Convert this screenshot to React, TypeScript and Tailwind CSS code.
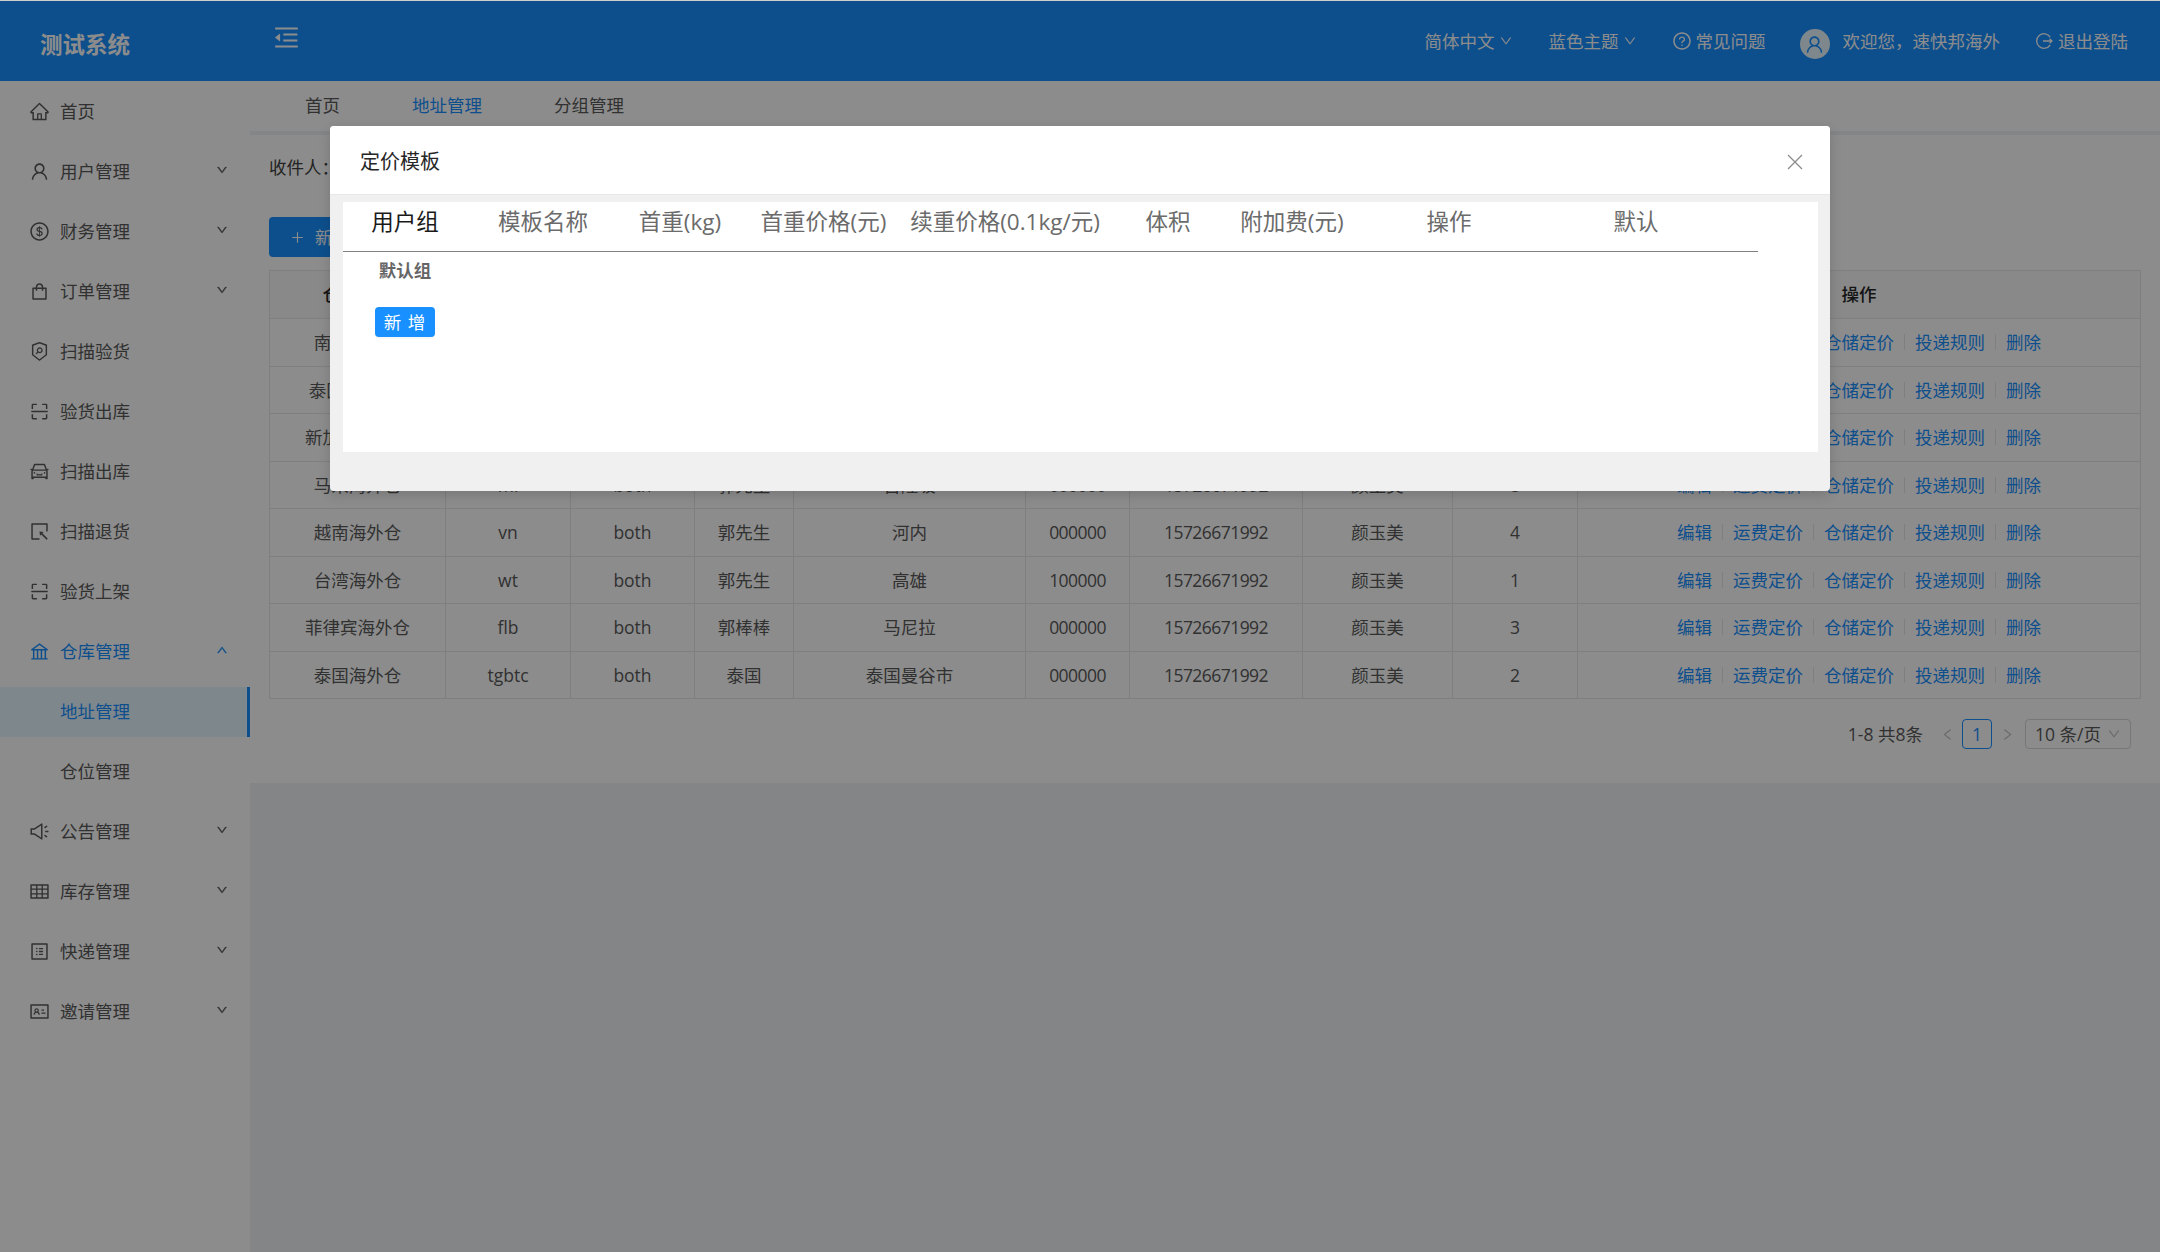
import React from "react";
import {
  AiOutlineHome, AiOutlineUser, AiOutlineDollar, AiOutlineShopping, AiOutlineSecurityScan, AiOutlineScan,
  AiOutlineCar, AiOutlineSelect, AiOutlineBank, AiOutlineSound, AiOutlineTable, AiOutlineProfile, AiOutlineIdcard,
  AiOutlineQuestionCircle, AiOutlineMenuFold, AiOutlinePlus, AiOutlineDown, AiOutlineUp, AiOutlineLeft, AiOutlineRight,
} from "react-icons/ai";

const Arrow = ({ up }: { up?: boolean }) =>
  up ? <AiOutlineUp size={12} className="ml-auto mr-[22px] stroke-[40px] mb-[3px]" /> : <AiOutlineDown size={12} className="ml-auto mr-[22px] stroke-[40px] mb-[3px]" />;

const menu: { label: string; icon: React.ReactNode; arrow?: boolean; open?: boolean }[] = [
  { label: "首页", icon: <AiOutlineHome size={21} /> },
  { label: "用户管理", icon: <AiOutlineUser size={21} />, arrow: true },
  { label: "财务管理", icon: <AiOutlineDollar size={21} />, arrow: true },
  { label: "订单管理", icon: <AiOutlineShopping size={21} />, arrow: true },
  { label: "扫描验货", icon: <AiOutlineSecurityScan size={21} /> },
  { label: "验货出库", icon: <AiOutlineScan size={21} /> },
  { label: "扫描出库", icon: <AiOutlineCar size={21} /> },
  { label: "扫描退货", icon: <AiOutlineSelect size={21} /> },
  { label: "验货上架", icon: <AiOutlineScan size={21} /> },
];
const menuAfter: { label: string; icon: React.ReactNode }[] = [
  { label: "公告管理", icon: <AiOutlineSound size={21} /> },
  { label: "库存管理", icon: <AiOutlineTable size={21} /> },
  { label: "快递管理", icon: <AiOutlineProfile size={21} /> },
  { label: "邀请管理", icon: <AiOutlineIdcard size={21} /> },
];

const rows = [
  ["南非海外仓", "nf", "both", "郭先生", "开普敦", "000000", "15726671992", "颜玉美", "5"],
  ["泰国1海外仓", "tg", "both", "郭先生", "曼谷", "000000", "15726671992", "颜玉美", "6"],
  ["新加坡海外仓", "xjp", "both", "郭先生", "新加坡", "000000", "15726671992", "颜玉美", "7"],
  ["马来海外仓", "ml", "both", "郭先生", "吉隆坡", "000000", "15726671992", "颜玉美", "8"],
  ["越南海外仓", "vn", "both", "郭先生", "河内", "000000", "15726671992", "颜玉美", "4"],
  ["台湾海外仓", "wt", "both", "郭先生", "高雄", "100000", "15726671992", "颜玉美", "1"],
  ["菲律宾海外仓", "flb", "both", "郭棒棒", "马尼拉", "000000", "15726671992", "颜玉美", "3"],
  ["泰国海外仓", "tgbtc", "both", "泰国", "泰国曼谷市", "000000", "15726671992", "颜玉美", "2"],
];
const heads = ["仓库名称", "编码", "类型", "收件人", "地址", "邮编", "电话", "负责人", "排序", "操作"];
const widths = [176, 125, 124, 99, 232, 104, 173, 150, 125, 563];
const ops = ["编辑", "运费定价", "仓储定价", "投递规则", "删除"];
const modalHeads = [
  ["用户组", 124], ["模板名称", 152], ["首重(kg)", 122], ["首重价格(元)", 165], ["续重价格(0.1kg/元)", 198],
  ["体积", 128], ["附加费(元)", 120], ["操作", 194], ["默认", 180],
] as const;

export default function App() {
  return (
    <div className="relative min-h-[1252px] h-[1252px] overflow-hidden bg-[#f0f2f5] text-[17.5px] text-[#595959] font-['Open_Sans','Noto_Sans_CJK_SC',sans-serif]">
      <div className="h-px bg-[#cfcfcf]" />
      <header className="h-[80px] bg-[#1890ff] text-white flex items-center">
        <div className="w-[250px] pl-[40px] pt-[8px] text-[22.5px] font-bold">测试系统</div>
        <AiOutlineMenuFold className="ml-[22px] mb-[8px]" size={29} />
        <div className="ml-auto flex items-center pr-[32px]">
          <span>简体中文</span>
          <AiOutlineDown size={14} className="ml-[4px]" />
          <span className="ml-[36px]">蓝色主题</span>
          <AiOutlineDown size={14} className="ml-[4px]" />
          <AiOutlineQuestionCircle size={20} className="ml-[35px]" />
          <span className="ml-[4px]">常见问题</span>
          <span className="ml-[34px] mt-[6px] w-[30px] h-[30px] rounded-full bg-[#e6f7ff] text-[#1890ff] flex items-center justify-center">
            <AiOutlineUser size={21} />
          </span>
          <span className="ml-[13px]">欢迎您，速快邦海外</span>
          <svg className="ml-[35px]" width="18" height="18" viewBox="0 0 18 18" fill="none" stroke="currentColor" strokeWidth="1.3">
            <path d="M15.2 5.2A7.3 7.3 0 1 0 15.2 12.8" />
            <path d="M8 9h9M14.5 6.8 17 9l-2.5 2.2" />
          </svg>
          <span className="ml-[5px]">退出登陆</span>
        </div>
      </header>
      <div className="flex h-[1171px]">
        <aside className="w-[250px] shrink-0 bg-white pt-[5.5px]">
          {menu.map((m) => (
            <div key={m.label} className="h-[50px] mb-[10px] flex items-center pl-[28.5px]">
              <span className="w-[21px] shrink-0">{m.icon}</span>
              <span className="ml-[10.5px]">{m.label}</span>
              {m.arrow && <Arrow />}
            </div>
          ))}
          <div className="h-[50px] mb-[10px] flex items-center pl-[28.5px] text-[#1890ff]">
            <span className="w-[21px] shrink-0"><AiOutlineBank size={21} /></span>
            <span className="ml-[10.5px]">仓库管理</span>
            <Arrow up />
          </div>
          <div className="h-[50px] mb-[10px] flex items-center pl-[60px] text-[#1890ff] bg-[#e6f7ff] border-r-[3px] border-[#1890ff]">地址管理</div>
          <div className="h-[50px] mb-[10px] flex items-center pl-[60px]">仓位管理</div>
          {menuAfter.map((m) => (
            <div key={m.label} className="h-[50px] mb-[10px] flex items-center pl-[28.5px]">
              <span className="w-[21px] shrink-0">{m.icon}</span>
              <span className="ml-[10.5px]">{m.label}</span>
              <Arrow />
            </div>
          ))}
        </aside>
        <main className="flex-1 min-w-0">
          <div className="h-[50px] bg-white flex items-center pb-[2px]">
            <span className="ml-[55px]">首页</span>
            <span className="ml-[72px] text-[#1890ff]">地址管理</span>
            <span className="ml-[72px]">分组管理</span>
          </div>
          <section className="mt-[4px] h-[648px] bg-white pl-[19px] pr-[19px]">
            <div className="h-[82px] flex items-center pb-[18px] text-[#404040]">收件人：</div>
            <button className="h-[40px] w-[120px] rounded-[4px] bg-[#1890ff] text-white flex items-center pl-[21px]">
              <AiOutlinePlus size={15} />
              <span className="ml-[10px]">新增</span>
            </button>
            <table className="mt-[13px] table-fixed border-collapse w-[1871px] text-center">
              <colgroup>
                {widths.map((w, i) => <col key={i} style={{ width: w }} />)}
              </colgroup>
              <thead>
                <tr className="h-[48px] bg-[#fafafa] text-[#262626] font-medium">
                  {heads.map((h) => <th key={h} className="border border-[#e8e8e8] font-medium">{h}</th>)}
                </tr>
              </thead>
              <tbody>
                {rows.map((r, idx) => (
                  <tr key={idx} className="h-[47.5px]">
                    {r.map((c, i) => (
                      <td key={i} className={"border border-[#e8e8e8] p-0 " + (i === 5 || i === 6 ? "tracking-[-0.55px]" : "")}>{c}</td>
                    ))}
                    <td className="border border-[#e8e8e8] p-0">
                      <div className="flex items-center justify-center text-[#1890ff]">
                        {ops.map((o, i) => (
                          <React.Fragment key={o}>
                            {i > 0 && <span className="mx-[10px] w-px h-[16px] bg-[#e8e8e8]" />}
                            <span>{o}</span>
                          </React.Fragment>
                        ))}
                      </div>
                    </td>
                  </tr>
                ))}
              </tbody>
            </table>
            <div className="mt-[20px] pr-[10px] flex items-center justify-end">
              <span>1-8 共8条</span>
              <AiOutlineLeft size={15} className="ml-[17px] text-[#bfbfbf]" />
              <span className="ml-[7px] w-[30px] h-[30px] rounded-[4px] border border-[#1890ff] text-[#1890ff] flex items-center justify-center">1</span>
              <AiOutlineRight size={15} className="ml-[8px] text-[#bfbfbf]" />
              <span className="ml-[10px] w-[106px] h-[30px] rounded-[4px] border border-[#d9d9d9] flex items-center pl-[9px] whitespace-nowrap">
                10 条/页
                <AiOutlineDown size={14} className="ml-auto mr-[9px] text-[#bfbfbf]" />
              </span>
            </div>
          </section>
        </main>
      </div>

      <div className="absolute inset-x-0 top-px bottom-0 bg-black/45">
        <div className="mt-[125px] mx-auto w-[1500px] h-[365px] flex flex-col rounded-[4px] overflow-hidden bg-[#f0f0f0] shadow-[0_4px_12px_rgba(0,0,0,0.15)]">
          <div className="h-[69px] shrink-0 bg-white border-b border-[#e8e8e8] flex items-center pl-[30px] pr-[27px] text-[20px] text-[#262626]">
            <span className="mt-[4px]">定价模板</span>
            <svg className="ml-auto mt-[3px] text-[#8c8c8c]" width="16" height="16" viewBox="0 0 16 16" fill="none" stroke="currentColor" strokeWidth="1.3">
              <path d="M1 1l14 14M15 1 1 15" />
            </svg>
          </div>
          <div className="mt-[7px] ml-[13px] mr-[12px] h-[250px] bg-white">
            <div className="w-[1415px] h-[50px] flex items-center border-b border-[#808080] text-[22.5px] text-[#6b6b6b] pb-[12px] pt-[2px]">
              {modalHeads.map(([t, w], i) => (
                <span key={t} className={"shrink-0 text-center whitespace-nowrap " + (i === 0 ? "text-[#1a1a1a]" : "")} style={{ width: w }}>{t}</span>
              ))}
            </div>
            <div className="w-[124px] text-center font-bold text-[#666666] mt-[6px] leading-[24px]">默认组</div>
            <button className="mt-[25px] ml-[32px] w-[60px] h-[30px] rounded-[4px] bg-[#1890ff] text-white tracking-[1px] shadow-[0_2px_0_rgba(0,0,0,0.03)]">新 增</button>
          </div>
        </div>
      </div>
    </div>
  );
}
